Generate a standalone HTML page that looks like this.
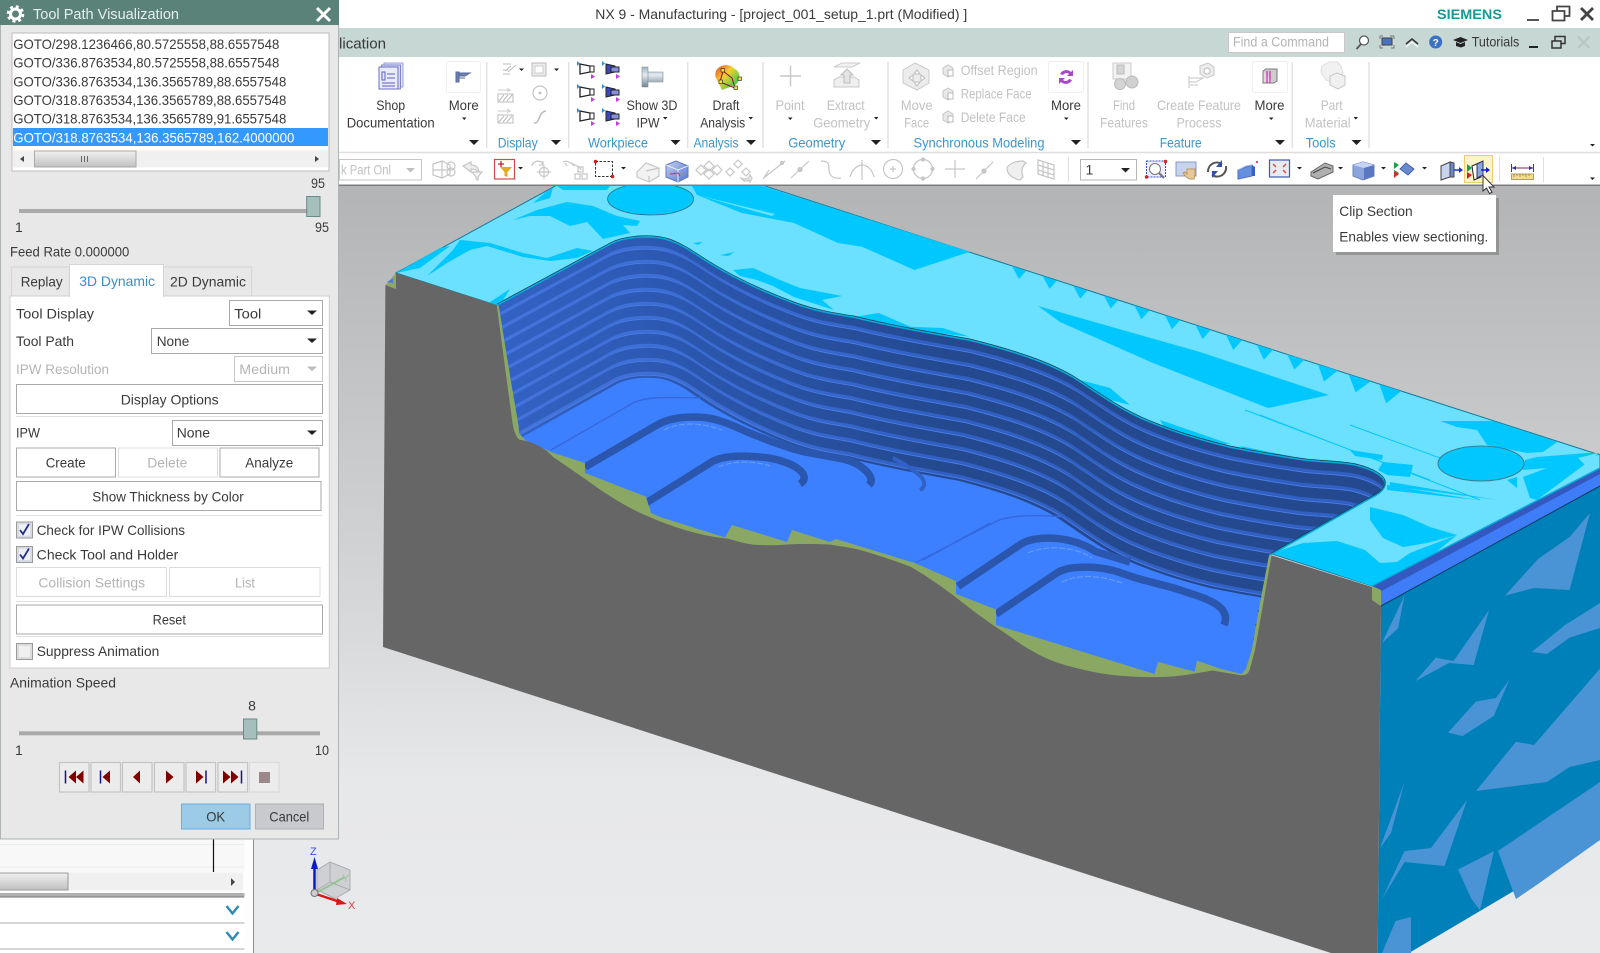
<!DOCTYPE html>
<html lang="en"><head><meta charset="utf-8"><title>NX 9 - Manufacturing</title>
<style>
html,body{margin:0;padding:0;background:#fff;width:1600px;height:953px;overflow:hidden}
svg{display:block;position:absolute;left:0;top:0}
text{font-family:"Liberation Sans",sans-serif;font-size:14px;fill:#3a3a3a}
.d{fill:#c2c2c2}.b{fill:#3b96cc}.g{fill:#b4b4b4}
.m{text-anchor:middle}
.btn{fill:#fff;stroke:#a9a9a9}.btd{fill:#fff;stroke:#dcdcdc}
.lr{stroke:#c6c6c6;fill:none;stroke-width:1.2}
.sep{stroke:#e2e2e2;stroke-width:1.5}
.ar{fill:#222}
</style></head><body>
<svg width="1600" height="953" viewBox="0 0 1600 953">
<defs>
<linearGradient id="bg" gradientUnits="userSpaceOnUse" x1="0" y1="185" x2="0" y2="953"><stop offset="0" stop-color="#b3b4b5"/><stop offset=".52" stop-color="#d4d5d6"/><stop offset=".78" stop-color="#e7e8ea"/><stop offset="1" stop-color="#e9eaec"/></linearGradient>
<linearGradient id="sc" x1="0" y1="0" x2="0" y2="1"><stop offset="0" stop-color="#f0f0f0"/><stop offset=".5" stop-color="#d8d8d8"/><stop offset="1" stop-color="#c0c0c0"/></linearGradient>
<linearGradient id="cyl" x1="0" y1="0" x2="0" y2="1"><stop offset="0" stop-color="#9fb4c0"/><stop offset=".4" stop-color="#e4eaee"/><stop offset="1" stop-color="#6f8494"/></linearGradient>
<linearGradient id="drf" x1="0" y1="0" x2="1" y2="1"><stop offset="0" stop-color="#e8402a"/><stop offset=".4" stop-color="#f4d030"/><stop offset=".8" stop-color="#50c850"/></linearGradient>
<linearGradient id="cb" x1="0" y1="0" x2="1" y2="1"><stop offset="0" stop-color="#c4d0ee"/><stop offset="1" stop-color="#5577cc"/></linearGradient>
<linearGradient id="tg" gradientUnits="userSpaceOnUse" x1="497" y1="0" x2="950" y2="0"><stop offset="0" stop-color="#3262c4"/><stop offset=".45" stop-color="#2a56ad"/><stop offset="1" stop-color="#24498f"/></linearGradient>
<linearGradient id="tm" gradientUnits="userSpaceOnUse" x1="497" y1="0" x2="950" y2="0"><stop offset="0" stop-color="#4474dc"/><stop offset=".5" stop-color="#3a6cd4"/><stop offset="1" stop-color="#3160c4"/></linearGradient>
<path id="rim" fill="none" d="M497,305L610,244C625,236 655,234 672,241C690,248 700,258 722,270C745,283 770,294 794,303C815,311 835,314 854,317C890,326 930,333 970,340C1010,350 1050,362 1078,380C1105,398 1125,412 1153,423C1180,434 1205,441 1230,447C1255,452 1285,457 1306,460C1325,462 1342,462 1356,465C1372,469 1386,476 1385,484C1384,492 1374,496 1367,500L1270.5,554.6"/>
<clipPath id="pk"><path d="M497,305L610,244C625,236 655,234 672,241C690,248 700,258 722,270C745,283 770,294 794,303C815,311 835,314 854,317C890,326 930,333 970,340C1010,350 1050,362 1078,380C1105,398 1125,412 1153,423C1180,434 1205,441 1230,447C1255,452 1285,457 1306,460C1325,462 1342,462 1356,465C1372,469 1386,476 1385,484C1384,492 1374,496 1367,500L1269,555L1260.7,599L1251.8,650L1246,668.6L1241.5,674L1221,669L1197,660.6L1194.6,671.6L1158,662L1154.5,674L996,625L996,609.5L956,594L956,581L914.5,563L836,539L830,542L792,530L787,542L732,525L725,537.5L660,517L651,513L646,496.7L585,473L585,463L553,452.7L525,440L519,433L518.8,426.7L510.8,380L498.7,305Z"/></clipPath>
<g id="ter">
<use href="#rim" stroke="url(#tg)" stroke-width="16" transform="translate(0,7)"/>
<use href="#rim" stroke="url(#tm)" stroke-width="3" transform="translate(0,10.5)"/>
<use href="#rim" stroke="#4a7ce4" stroke-width="1" transform="translate(0,12.5)"/>
</g>
<g id="wp"><path d="M-7,-5L3,-3V3L-7,5Z" fill="#fff" stroke="#222" stroke-width="1.3"/><path d="M3,-3H7V3H3Z" fill="#fff" stroke="#222"/><path d="M-10,-8l3,2.5l-3,2.5Z" fill="#2f8fd8"/><path d="M4,5l4,2.5l-4,2.5Z" fill="#c040d8"/></g>
<g id="wq"><path d="M-6,-5L3,-3V3L-6,5Z" fill="#3a48b8" stroke="#222"/><path d="M-1,-2H7V3H-1Z" fill="#8a90e0" stroke="#222"/><path d="M-10,-8l3,2.5l-3,2.5Z" fill="#2f8fd8"/><path d="M4,5l4,2.5l-4,2.5Z" fill="#c040d8"/></g>
<g id="hat"><rect x="-8" y="-3" width="15" height="8" fill="#fff" stroke="#bbb"/><path d="M-7,4l5,-6M-3,4l5,-6M1,4l5,-6" stroke="#bbb"/><path d="M-8,-7h12l-3,-2M4,-7l-3,2" stroke="#ccc" fill="none"/></g>
<g id="sf"><path d="M-5,-3l5,-3l5,3v6l-5,3l-5,-3Z" fill="#e8e8e8" stroke="#c6c6c6"/><rect x="0" y="-1" width="5" height="6" fill="#fff" stroke="#b8b8b8"/></g>
</defs>

<!-- viewport -->
<rect x="253" y="185" width="1347" height="768" fill="url(#bg)"/>

<!-- part top surface -->
<path d="M396,273L557,185H762L1000,262L1600,455V468L1372,586Z" fill="#6ce0ff" stroke="#127a9c" stroke-width="1"/>
<g fill="#00c8ff">
<path d="M557,186H610L607,190H563Z"/>
<path d="M547,191L553,188L550,198L533,203Z"/>
<path d="M513,220L537,210L567,202L593,206L617,216L640,221L637,226L623,225L630,233L603,239L587,222L570,226L550,216L530,216Z"/>
<path d="M460,240L490,243L523,253L547,258L577,248L593,251L577,258L550,261L523,257L487,246L470,250L447,263L427,276L453,250Z"/>
<path d="M396,273L440,248L450,246L420,268Z"/>
<path d="M692,186H762L970,251.7L914.5,270L862,246.7L838,243L794,223L741.8,213L697,195Z"/>
<path d="M733,270L753,268L780,280L800,288L842,296L822,300L834,310L794,297L773,286L757,280L740,276Z"/>
<path d="M693,243L703,242L698,245ZM720,255L735,252L728,256Z"/>
<path d="M487,304L510,289L500,305Z"/>
<path d="M854,317L878.6,313L910.5,326.7L942.7,328L970,336.7L910,330Z"/>
<path d="M1038,306L1200,352L1329,395L1268,408L1153,363L1060,322Z"/>
<path d="M1012,266l14,5 -7,8zm30.6,9.85l14,5 -7,8zm30.6,9.85l14,5 -7,8zm30.6,9.85l14,5 -7,8zm30.6,9.85l15,5 -8,9zm30.6,9.85l15,5 -8,9zm30.6,9.85l15,5 -8,9zm30.6,9.85l16,5 -9,10zm30.6,9.85l16,5 -9,10zm30.6,9.85l17,5 -10,10zm30.6,9.85l20,6 -14,11zm30.6,9.85l22,7 -15,11zm30.6,9.85l22,7 -15,12z"/>
<path d="M1440,421H1493L1557,442L1543,452L1527,453L1487,445L1477,430L1457,427Z"/>
<path d="M1525,460L1537,457L1587,453H1600L1537,500L1530,498L1523,477L1547,468L1523,470Z"/>
<path d="M1272,553L1303,543L1337,541L1365,550L1380,563L1397,562L1410,553L1457,535L1430,557L1372,586Z"/>
<path d="M1370,507L1403,515L1430,527L1457,535L1427,543L1403,547L1383,538L1370,520Z"/>
<path d="M1387,485L1477,500L1387,490ZM1390,482L1497,500L1390,486Z"/>
<path d="M1383,462L1413,465L1410,477L1387,475L1378,470Z"/>
<path d="M1350,450L1383,455L1382,460L1355,456Z"/>
<path d="M1507,480L1517,477L1517,488Z"/>
<path d="M1240,446L1290,456L1260,462Z"/><path d="M1160,420L1230,444L1180,446L1168,434Z"/><path d="M1080,380L1110,388L1130,405L1095,396Z"/>
</g>
<g fill="#6ce0ff">
<path d="M697,195L775,214L772,216Z"/>
<path d="M1543,452L1568,445L1563,453Z"/><path d="M1578,458L1598,453L1587,467Z"/>
</g>
<path d="M1245,410L1430,480M1350,425L1500,480M1260,415L1480,500" stroke="#00c8ff" fill="none"/>
<ellipse cx="650.6" cy="199" rx="43" ry="16" fill="#00c8ff" stroke="#2a6f80" stroke-width=".8"/>
<ellipse cx="1481" cy="463.500" rx="43" ry="17.5" fill="#00c8ff" stroke="#3b7f90" stroke-width="1"/>

<!-- right ledge and side face -->
<path d="M1381,606L1600,486V840L1409,953H1377.7Z" fill="#0080b8"/>
<g fill="#4a94d6">
<path d="M1505,595.6L1538,559L1569.6,537L1590,513L1569.6,590L1534,588Z"/>
<path d="M1415.6,681L1435.7,657.7L1453.6,661L1489,610L1473.7,665L1449,663Z"/>
<path d="M1531.7,652L1565,625L1600,603V628L1569.6,637.6L1547,654Z"/>
<path d="M1448,732.6L1476,701.5L1496,698L1509.4,679.6L1493.7,716L1462.5,736Z"/>
<path d="M1476,791L1516,741.7L1534,745L1600,668.6V760L1569.6,767L1547,782Z"/>
<path d="M1380,848L1404.5,782L1391,833Z"/>
<path d="M1382,899L1404.5,851L1431,848L1467,800L1444.6,866L1404.5,862Z"/>
<path d="M1458,869.6L1494,851L1480,910L1471.4,899Z"/>
<path d="M1498,851L1600,782V840L1538,884L1516,899Z"/>
<path d="M1382,953L1395.6,921L1411,917V953Z"/>
<path d="M1382,643L1404.5,595.6L1398,628.4Z"/>
</g>
<path d="M1372,586L1600,468V486L1381,606L1372,599Z" fill="#3f7cf8"/>
<path d="M1372,586L1600,468V474L1376,594Z" fill="#3358c0"/>
<path d="M1372,586L1600,468" stroke="#0aa8d8" stroke-width="1.5"/>
<path d="M1381,606L1600,486" stroke="#123a60" stroke-width="1"/>

<!-- green section beneath pocket -->
<path d="M497,305L1271,555L1254,690L1000,690L500,470Z" fill="#8aa864"/>
<path d="M385.4,285L396,273V289Z" fill="#8aa864"/><path d="M387,282L393,278.5V283Z" fill="#4a78e0"/>
<path d="M1372,586V600L1381,606V590Z" fill="#8aa864"/>

<!-- pocket -->
<g clip-path="url(#pk)">
<rect x="480" y="220" width="920" height="470" fill="#3d80ff"/>
<use href="#ter"/>
<use href="#ter" transform="matrix(.996,0,0,1,2.8,14)"/>
<use href="#ter" transform="matrix(.992,0,0,1,5.6,28)"/>
<use href="#ter" transform="matrix(.988,0,0,1,8.4,42)"/>
<use href="#ter" transform="matrix(.984,0,0,1,11.2,56)"/>
<use href="#ter" transform="matrix(.98,0,0,1,14,70)"/>
<use href="#ter" transform="matrix(.976,0,0,1,16.8,84)"/>
<use href="#ter" transform="matrix(.972,0,0,1,19.6,98)"/>
<use href="#ter" transform="matrix(.968,0,0,1,22.4,112)"/>
<use href="#ter" transform="matrix(.964,0,0,1,25.2,126)"/>
<g fill="none">
<path d="M551,450L633,403C645,397 660,397 701,398M915.6,562.7L993.8,522.5C1005,516 1030,514 1065,517M923,560L990,523" stroke="#3568dc" stroke-width="1.4"/>
<path d="M585,467L657,425C672,416 700,415 717,420C735,425 745,432 760,437C780,445 795,450 810,453C830,457 848,458 860,466C870,473 874,480 869,485" stroke="#2a56ad" stroke-width="7.500"/>
<path d="M646,503L710,463C720,456 740,455 760,457C775,458 790,463 797,468C806,474 806,480 800,484" stroke="#2a56ad" stroke-width="7.500"/>
<path d="M893,458C905,464 917,472 922,478C926,484 924,488 920,490" stroke="#2f62c4" stroke-width="4"/>
<path d="M958,586.4L1020.5,544.4C1035,535 1070,535 1096,551.7L1130,562" stroke="#2a56ad" stroke-width="7.500"/>
<path d="M996,614L1056,573.6C1068,565 1100,565 1123,573.6C1145,582 1168,585 1185.7,592C1205,598 1232,606 1224,625" stroke="#2a56ad" stroke-width="7.500"/>
<path d="M664,430C680,422 700,422 722,430M718,467C735,460 755,461 770,466M1028,553C1045,545 1075,546 1092,558M1062,582C1078,574 1100,575 1122,583" stroke="#6a9cff" stroke-width="1.100" stroke-dasharray="6 2"/>
</g>
</g>
<use href="#rim" stroke="#0aa8d8" stroke-width="2"/>
<use href="#rim" stroke="#11404f" stroke-width=".7" transform="translate(0,-1)"/>

<!-- gray section face -->
<path d="M385.4,285L396,289L396,273L496.7,305L506.7,380L512.8,425C515,435 518,440 521,440C530,441 545,447 553,457C565,465 575,472 589,481.7C610,497 630,509 649,516.7C670,526 700,536 727,538.5C740,542 750,545 760,545C775,546 790,544 800,544C815,544 825,544 833,545C845,547 852,548 860,550C875,554 895,561 910.5,566.7L922,573.6C935,582 948,591 958,599C972,610 985,620 998,628.4C1010,636 1022,646 1034,652C1048,660 1063,665 1078.6,668.6C1093,672 1108,675 1123,676C1138,677 1153,677.5 1168,676.7C1183,676 1198,673 1212.5,670.5L1239,675C1245,676 1248,674 1249.5,670.5L1255,650L1264,599L1271.4,555.4L1372,587L1372,600L1381,606L1377.7,953H1331L383,647Z" fill="#666"/>

<!-- triad -->
<path d="M317,870l13,-8l20,8v20l-15,8.500l-18,-8.500Z" fill="#b9bcbf" fill-opacity=".55" stroke="#a9acae"/>
<path d="M330,862v20l20,8M330,882l-13,8" stroke="#a9acae" fill="none"/>
<path d="M316,893L345,877" stroke="#7fbf7f" stroke-width="2" opacity=".7"/>
<text x="342" y="882" fill="#8fc28f" style="font-size:11px;fill:#9cc49c">Y</text>
<path d="M314.500,893V868" stroke="#0a1ac8" stroke-width="2.500"/><path d="M314.500,857l-3.500,12h7Z" fill="#0a1ac8"/>
<text x="310" y="855" style="font-size:11px;fill:#3a50e0">Z</text>
<path d="M316,894L340,902" stroke="#d81818" stroke-width="2.500"/><path d="M347,904l-10,-6l-1,7Z" fill="#d81818"/>
<text x="348" y="909" style="font-size:11px;fill:#e04040">X</text>
<circle cx="314.500" cy="893" r="3.500" fill="#ccc" stroke="#777"/>

<!-- window chrome -->
<rect x="339" y="0" width="1261" height="28" fill="#fff"/>
<text x="595.300" y="19" textLength="372" lengthAdjust="spacingAndGlyphs">NX 9 - Manufacturing - [project_001_setup_1.prt (Modified) ]</text>
<text x="1437" y="19" textLength="65" lengthAdjust="spacingAndGlyphs" style="font-weight:bold;fill:#159a96;font-size:14px">SIEMENS</text>
<path d="M1527,20h12" stroke="#555" stroke-width="2"/>
<path d="M1552.500,11h12v9.500h-12ZM1557,10.500V6.500h12.500v9.500h-5" fill="none" stroke="#444" stroke-width="1.800"/>
<path d="M1581,8l12,12M1593,8l-12,12" stroke="#444" stroke-width="2.800"/>
<rect x="339" y="28" width="1261" height="29" fill="#c6d7d4"/>
<text x="339" y="48.300" textLength="47" lengthAdjust="spacingAndGlyphs" style="font-size:15px">lication</text>
<rect x="1228.500" y="32.500" width="116" height="20" fill="#fff" stroke="#c8c8c8"/>
<text x="1233" y="46.500" textLength="96" lengthAdjust="spacingAndGlyphs" class="g">Find a Command</text>
<circle cx="1364" cy="40.500" r="4.500" fill="#fff" stroke="#555" stroke-width="1.200"/><path d="M1361,44l-4.500,5" stroke="#555" stroke-width="1.800"/>
<path d="M1380,36h3m7,0h4v-0M1380,36v3M1394,36v3M1380,45v3h3M1394,45v3h-3" stroke="#777" fill="none"/><rect x="1382" y="38" width="10" height="7" fill="#4a70c0" stroke="#444"/>
<path d="M1406,44l6,-5l6,5" fill="none" stroke="#333" stroke-width="1.600"/><path d="M1406,47l6,-5l6,5" fill="none" stroke="#fff"/>
<circle cx="1435.700" cy="42" r="6.500" fill="#3a70c8"/><text x="1435.700" y="46" class="m" style="font-size:10px;font-weight:bold;fill:#fff">?</text>
<path d="M1453,40l7.500,-3l7.500,3l-7.500,3Z" fill="#222"/><path d="M1456,42v4l5,1.500l4,-1.500v-4l-4.500,2Z" fill="#222"/>
<text x="1471.700" y="46.500" textLength="47.600" lengthAdjust="spacingAndGlyphs">Tutorials</text>
<path d="M1529,47h9" stroke="#222" stroke-width="2"/>
<path d="M1552,41h9v7h-9ZM1555,40.500V36.500h10v7h-4" fill="none" stroke="#333" stroke-width="1.500"/>
<path d="M1578,36.500l11.500,11.500M1589.500,36.500l-11.500,11.500" stroke="#bcc4c2" stroke-width="2.200"/>

<!-- ribbon -->
<rect x="339" y="57" width="1261" height="128" fill="#fff"/>
<path d="M339,152.500H1600" stroke="#dedede" stroke-width="1.500"/>
<path d="M339,185.300H1600" stroke="#7c7c7c" stroke-width="1.500"/>
<g class="sep"><path d="M486.700,62V148M568.700,62V148M687.700,62V148M763,62V148M888,62V148M1088,62V148M1292.300,62V148M1369,62V148"/></g>
<rect x="446.500" y="61.500" width="34" height="31" rx="2" fill="#fff" stroke="#efefef"/>
<rect x="1048.500" y="61.500" width="35" height="31" rx="2" fill="#fff" stroke="#efefef"/>
<rect x="1252.500" y="61.500" width="35" height="31" rx="2" fill="#fff" stroke="#efefef"/>

<g text-anchor="middle">
<text x="390.700" y="110" textLength="29" lengthAdjust="spacingAndGlyphs">Shop</text>
<text x="390.700" y="127.700" textLength="88" lengthAdjust="spacingAndGlyphs">Documentation</text>
<text x="463.700" y="110" textLength="30" lengthAdjust="spacingAndGlyphs">More</text>
<text x="652" y="110" textLength="51" lengthAdjust="spacingAndGlyphs">Show 3D</text>
<text x="648" y="127.700" textLength="23" lengthAdjust="spacingAndGlyphs">IPW</text>
<text x="726" y="110" textLength="27" lengthAdjust="spacingAndGlyphs">Draft</text>
<text x="722.700" y="127.700" textLength="45" lengthAdjust="spacingAndGlyphs">Analysis</text>
<text x="790" y="110" textLength="29" lengthAdjust="spacingAndGlyphs" class="d">Point</text>
<text x="845.700" y="110" textLength="38" lengthAdjust="spacingAndGlyphs" class="d">Extract</text>
<text x="841.700" y="127.700" textLength="57" lengthAdjust="spacingAndGlyphs" class="d">Geometry</text>
<text x="916.700" y="110" textLength="32" lengthAdjust="spacingAndGlyphs" class="d">Move</text>
<text x="916.700" y="127.700" textLength="25" lengthAdjust="spacingAndGlyphs" class="d">Face</text>
<text x="1066" y="110" textLength="30" lengthAdjust="spacingAndGlyphs">More</text>
<text x="1124" y="110" textLength="22" lengthAdjust="spacingAndGlyphs" class="d">Find</text>
<text x="1124" y="127.700" textLength="48" lengthAdjust="spacingAndGlyphs" class="d">Features</text>
<text x="1199" y="110" textLength="84" lengthAdjust="spacingAndGlyphs" class="d">Create Feature</text>
<text x="1199" y="127.700" textLength="45" lengthAdjust="spacingAndGlyphs" class="d">Process</text>
<text x="1269.500" y="110" textLength="30" lengthAdjust="spacingAndGlyphs">More</text>
<text x="1331.700" y="110" textLength="22" lengthAdjust="spacingAndGlyphs" class="d">Part</text>
<text x="1327.700" y="127.700" textLength="46" lengthAdjust="spacingAndGlyphs" class="d">Material</text>
<text x="517.700" y="147.500" textLength="40" lengthAdjust="spacingAndGlyphs" class="b">Display</text>
<text x="618" y="147.500" textLength="60" lengthAdjust="spacingAndGlyphs" class="b">Workpiece</text>
<text x="716" y="147.500" textLength="45" lengthAdjust="spacingAndGlyphs" class="b">Analysis</text>
<text x="816.700" y="147.500" textLength="57" lengthAdjust="spacingAndGlyphs" class="b">Geometry</text>
<text x="979" y="147.500" textLength="131" lengthAdjust="spacingAndGlyphs" class="b">Synchronous Modeling</text>
<text x="1180.700" y="147.500" textLength="42" lengthAdjust="spacingAndGlyphs" class="b">Feature</text>
<text x="1320.700" y="147.500" textLength="30" lengthAdjust="spacingAndGlyphs" class="b">Tools</text>
</g>
<text x="960.700" y="75" textLength="77" lengthAdjust="spacingAndGlyphs" class="d">Offset Region</text>
<text x="960.700" y="98.500" textLength="71" lengthAdjust="spacingAndGlyphs" class="d">Replace Face</text>
<text x="960.700" y="122" textLength="65" lengthAdjust="spacingAndGlyphs" class="d">Delete Face</text>

<!-- group arrows -->
<g class="ar">
<path d="M469,140h10l-5,5ZM551,140h10l-5,5ZM670.500,140h10l-5,5ZM746,140h10l-5,5ZM871,140h10l-5,5ZM1071,140h10l-5,5ZM1275,140h10l-5,5ZM1351.500,140h10l-5,5Z"/>
<path d="M1590,144h5l-2.500,2.500ZM1590,177.500h5l-2.500,2.500Z"/>
<path d="M462,117.500h4.500l-2.250,2.500ZM788,117.500h4.500l-2.250,2.500ZM1064,117.500h4.500l-2.250,2.500ZM1269,117.500h4.500l-2.250,2.500ZM663,117h4.500l-2.250,2.500ZM748.500,117h4.500l-2.250,2.500ZM874,117h4.500l-2.250,2.500ZM1353.500,117h4.500l-2.250,2.500Z"/>
<path d="M519,68.500h5l-2.500,2.500ZM554,68.500h5l-2.500,2.500Z"/>
</g>

<!-- ribbon icons -->
<rect x="384" y="63" width="19" height="24" fill="#e4e6f8" stroke="#9a9fd8"/><rect x="381.500" y="65" width="19" height="24" fill="#d6daf6" stroke="#7f86cc"/><rect x="379" y="67" width="19" height="22" fill="#e9ebfb" stroke="#6a70c0"/><path d="M382,72h3v8h-3ZM387,74h8M387,78h8M382,83h13M382,86h13" stroke="#5a62b8" fill="none"/>
<path d="M456,72h3v10h-3ZM459,73h11l-5,3h-6ZM459,78h6" fill="#6c80b4" stroke="#5a6a98"/>
<path d="M503,64h8M503,70h5M511,66l-6,5M508,72l8,-7M503,74h7" stroke="#bbb" fill="none"/>
<rect x="532" y="63" width="14" height="13" fill="#ececec" stroke="#bbb"/><rect x="535" y="66" width="8" height="7" fill="#fff" stroke="#ccc"/>
<use href="#hat" x="506" y="97"/><use href="#hat" x="506" y="118"/>
<circle cx="540" cy="93" r="7" fill="#fff" stroke="#c4c4c4" stroke-width="1.200"/><circle cx="540" cy="93" r="1.400" fill="#bbb"/>
<path d="M534,123C540,124 538,112 546,111" stroke="#bbb" fill="none" stroke-width="1.500"/>
<use href="#wp" x="587" y="69"/><use href="#wq" x="612" y="69"/><use href="#wp" x="587" y="92"/><use href="#wq" x="612" y="92"/><use href="#wp" x="587" y="116"/><use href="#wq" x="612" y="116"/>
<path d="M642,67h6v20h-6ZM648,72h15v10h-15Z" fill="url(#cyl)" stroke="#7f8e98" stroke-width=".6"/>
<path d="M716,78C712,68 726,60 735,69C742,73 740,82 735,85L722,90Z" fill="url(#drf)"/>
<path d="M723,71L720,82L735,88M723,71L732,78L735,88" stroke="#8a1020" fill="none"/><g fill="#f0e040" stroke="#222" stroke-width=".6"><rect x="721" y="68.500" width="3.500" height="3.500"/><rect x="719" y="80" width="3.500" height="3.500"/><rect x="738" y="77" width="3.500" height="3.500"/><rect x="734" y="86" width="3.500" height="3.500"/></g>
<path d="M780,76h21M790.500,65.500v21" stroke="#c8c8c8" stroke-width="1.500"/>
<path d="M834,80v7h25v-7l-5,-3h-15Z" fill="#efefef" stroke="#c8c8c8"/><path d="M844,83v-8h-3l6,-6l6,6h-3v8Z" fill="#e4e4e4" stroke="#bbb"/><path d="M834,67l8,-4h18l-8,4Z" fill="#f2f2f2" stroke="#ccc"/>
<path d="M903,70l12,-7l14,7v13l-12,7l-14,-7Z" fill="#ececec" stroke="#cbcbcb"/><path d="M917,78m0,-8l3,4h-6ZM917,86l3,-4h-6ZM909,78l4,-3v6ZM925,78l-4,-3v6Z" fill="#fff" stroke="#bbb"/>
<use href="#sf" x="948" y="71"/><use href="#sf" x="948" y="94"/><use href="#sf" x="948" y="117"/>
<path d="M1060,74a7,7 0 0 1 11,-2l2,-2v6h-6l2,-2a4,4 0 0 0 -6,1ZM1072,80a7,7 0 0 1 -11,2l-2,2v-6h6l-2,2a4,4 0 0 0 6,-1Z" fill="#a848c8"/>
<rect x="1113" y="63" width="18" height="16" fill="#f2f2f2" stroke="#ccc"/><rect x="1117" y="65" width="7" height="9" fill="#d4d4d4" stroke="#bbb"/><circle cx="1120" cy="84" r="5.500" fill="#d4d4d4" stroke="#bbb"/><circle cx="1132" cy="82" r="6" fill="#d0d0d0" stroke="#bbb"/>
<path d="M1189,76v12M1189,78h14l-7,4h-7M1190,85h8" stroke="#c4c4c4" fill="none"/><path d="M1200,66l8,-3l6,4v8l-7,3l-7,-4Z" fill="#ececec" stroke="#c8c8c8"/><circle cx="1207" cy="71" r="3" fill="#fff" stroke="#bbb"/>
<rect x="1263" y="71" width="11" height="12" fill="#ddd" stroke="#777"/><path d="M1263,71l3,-2h11v12l-3,2" fill="#ccc" stroke="#777"/><path d="M1267,71v12M1270,71v12" stroke="#e020c0" stroke-width="1.200"/>
<path d="M1322,66l7,-4h8l4,4l2,7l-7,10l-10,-3l-5,-8Z" fill="#f1f1f1" stroke="#ddd"/><path d="M1330,76l7,-3l8,3v9l-7,4l-8,-4Z" fill="#f0f0f0" stroke="#c8c8c8"/>

<!-- toolbar -->
<rect x="339.500" y="159.500" width="82" height="20.500" fill="#fff" stroke="#c6c6c6"/>
<text x="341" y="174.500" textLength="50" lengthAdjust="spacingAndGlyphs" class="d">k Part Onl</text>
<path d="M406,168h9l-4.500,4.500Z" fill="#c0c0c0"/>
<g class="lr">
<path d="M433,164l9,-3v17l-9,-3ZM442,161l8,4v9l-8,4M433,170h17"/><circle cx="451" cy="166" r="4"/><circle cx="451" cy="172" r="4"/>
<path d="M463,166l8,-4v3c6,0 8,4 8,8c-2,-3 -4,-4 -8,-4v3Z" fill="#eee"/><path d="M472,172h10l-4,5v3l-2,-1v-2Z" fill="#f4f4f4"/>
<path d="M532,166a6,6 0 0 1 11,-2M543,161v4h-4"/><circle cx="544" cy="172" r="4.500"/><path d="M544,165v14M537,172h14"/>
<path d="M563,162c4,-2 7,1 10,2c3,2 7,2 8,6M565,163l2,3M572,163l2,3"/><rect x="578" y="167" width="5" height="5"/><rect x="575" y="174" width="5" height="5"/><rect x="582" y="174" width="5" height="5"/>
<path d="M637,172l9,-9l13,5v8l-10,6l-12,-5Z" fill="#f2f2f2"/><path d="M646,171l13,-3M649,176v6"/>
<path d="M709,161l5,5l-5,5l-5,-5ZM709,169l5,5l-5,5l-5,-5ZM701,165l5,5l-5,5l-5,-5ZM717,165l5,5l-5,5l-5,-5Z"/>
<path d="M738,160l4,4l-4,4l-4,-4ZM730,168l4,4l-4,4l-4,-4ZM746,168l4,4l-4,4l-4,-4Z"/><path d="M741,178c4,2 8,1 9,-3l2,3l-2,4l-1,-2c-3,2 -6,1 -8,-2Z" fill="#eee"/>
<path d="M765,177L785,161M769,170l-6,9" /><circle cx="782" cy="163" r="1.500" fill="#c6c6c6"/>
<path d="M791,178l18,-17M798,171l3,0"/><circle cx="800" cy="169.500" r="2" fill="#c6c6c6"/>
<path d="M821,161c8,0 8,4 8,8c0,5 2,10 12,9"/>
<path d="M850,177c2,-8 8,-12 12,-12c5,0 10,4 12,12M862,165v15M862,160v6"/>
<circle cx="893" cy="169" r="9.500"/><path d="M890,169h6M893,166v6"/>
<circle cx="923" cy="169" r="9.500"/><circle cx="923" cy="159.500" r="1.500" fill="#c6c6c6"/><circle cx="913.500" cy="169" r="1.500" fill="#c6c6c6"/><circle cx="932.500" cy="169" r="1.500" fill="#c6c6c6"/><circle cx="923" cy="178.500" r="1.500" fill="#c6c6c6"/>
<path d="M945,169h20M955,160v18"/><path d="M976,179l17,-17"/><circle cx="984" cy="171" r="2" fill="#c6c6c6"/>
<path d="M1007,168c2,-5 10,-7 16,-7l3,2c-4,3 -5,8 -3,14l-3,3c-8,-2 -13,-6 -13,-12Z" fill="#efefef"/>
<path d="M1038,160l16,5v14l-16,-5ZM1043,162v13M1048,163v14M1038,165l16,5M1038,170l16,5"/>
</g>
<rect x="494.500" y="159.500" width="20" height="19.500" fill="#fff" stroke="#d24a4a" stroke-width="1.200"/><path d="M500,167h12l-4.500,5v5l-3,-1v-4Z" fill="#e8a820"/><path d="M498,164h6M501,161v6" stroke="#c02020" stroke-width="1.300"/>
<path d="M518,167h5l-2.500,2.500ZM621,167h5l-2.500,2.500Z" class="ar"/>
<rect x="595.500" y="161.500" width="17" height="15" fill="none" stroke="#333" stroke-dasharray="2.500 1.500"/><circle cx="595.500" cy="161.500" r="1.800" fill="#d02020"/><circle cx="612.500" cy="176.500" r="1.800" fill="#d02020"/>
<path d="M666,165l10,-4l12,5v11l-10,5l-12,-5Z" fill="url(#cb)" stroke="#5a78c8"/><path d="M666,165l12,5l10,-4M678,170v12" stroke="#fff" fill="none" stroke-width=".8"/><path d="M670,174l8,-1l2,3" stroke="#d83030" fill="none"/>
<path d="M1068.500,157V182" stroke="#dedede"/>
<rect x="1080.500" y="159.500" width="56" height="20.500" fill="#fff" stroke="#b6b6b6"/><text x="1085.500" y="174.500">1</text><path d="M1121,168h9l-4.500,4.500Z" class="ar"/>
<rect x="1146.500" y="161" width="19" height="16" fill="#eef" stroke="#3050c0" stroke-dasharray="2 1"/><circle cx="1155" cy="169" r="5.500" fill="#fff" stroke="#777"/><path d="M1159,173l5,5" stroke="#777" stroke-width="2"/><circle cx="1146.500" cy="177" r="1.700" fill="#d82020"/><circle cx="1165.500" cy="161.500" r="1.700" fill="#d82020"/>
<rect x="1176" y="162" width="20" height="14" fill="#c8d4ee" stroke="#8898c8"/><path d="M1190,179c-4,-1 -5,-4 -7,-6l2,-1l2,2v-5h8v5l-1,5Z" fill="#e8c898" stroke="#b89860"/>
<path d="M1208,172a9,9 0 0 1 14,-8M1226,166a9,9 0 0 1 -14,9" fill="none" stroke="#555" stroke-width="2"/><path d="M1222,160v7h-6ZM1212,178v-7h6Z" fill="#3050b0"/>
<path d="M1238,170l14,-5v11l-14,3Z" fill="#6890e0" stroke="#4a6cc0"/><path d="M1252,165l3,2v9l-3,0Z" fill="#3860c0"/><path d="M1238,170l8,-4l6,-1" stroke="#a0b8f0" fill="none"/><circle cx="1257" cy="162" r="1" fill="#d02020"/>
<rect x="1269.500" y="160" width="20" height="17" fill="#e8eaf6" stroke="#3a5ab0" stroke-width="1.200"/><path d="M1273,164l3,3M1286,164l-3,3M1273,173l3,-3M1286,173l-3,-3" stroke="#e05030" stroke-width="1.500"/>
<path d="M1297,167h5l-2.500,2.500ZM1338,167h5l-2.500,2.500ZM1381,167h5l-2.500,2.500ZM1422,167h5l-2.500,2.500Z" class="ar"/>
<path d="M1311,172l14,-9l8,3v6l-15,7l-7,-3Z" fill="#b0b0b0" stroke="#666"/><path d="M1313,173l12,-6l6,2" stroke="#444" fill="none"/>
<path d="M1353,165l10,-3l11,3v11l-11,4l-10,-4Z" fill="#8ca4dc" stroke="#6a86c8"/><path d="M1353,165l11,3l10,-3l-11,-3Z" fill="#c8d4f4"/><path d="M1364,168v12l10,-4v-11Z" fill="#5a78c0"/>
<path d="M1394,162l5,3l-5,4ZM1394,170l5,3l-5,4Z" fill="#18a048"/><path d="M1394,171l5,3l-5,4Z" fill="#d03030"/><path d="M1400,169l6,-6l8,6l-6,6Z" fill="#6a8ad0" stroke="#4060b0"/>
<path d="M1441,166l9,-4v15l-9,3Z" fill="#c8d4ee" stroke="#444"/><path d="M1450,162l4,1v14l-4,0Z" fill="#6c88c8" stroke="#444"/><path d="M1454,170h7" stroke="#2030d0" stroke-width="1.500"/><path d="M1459,167l4,3l-4,3Z" fill="#2030d0"/>
<rect x="1464.500" y="155.500" width="28" height="27" fill="#fff3c8" stroke="#f0cc70"/>
<path d="M1472,166l9,-4v15l-7,3Z" fill="#fff" stroke="#222"/><path d="M1477,164l6,-3v14l-6,3Z" fill="#88a8e0" stroke="#336"/><path d="M1481,170h7" stroke="#1020e0" stroke-width="1.500"/><path d="M1486,167l4,3l-4,3Z" fill="#1020e0"/><path d="M1467,164l5,4l-5,4Z" fill="#18a048"/><path d="M1467,172l5,3l-5,4Z" fill="#d02020"/>
<path d="M1499.500,157V182M1543.500,157V182" stroke="#dedede"/>
<path d="M1512,168h21M1511.500,164v8M1533.500,164v8" stroke="#8a2040" fill="none"/><path d="M1512,168l4,-2v4ZM1533,168l-4,-2v4Z" fill="#2030c0"/><rect x="1511.500" y="174" width="22" height="5.500" fill="#f2dc90" stroke="#b0a060"/><path d="M1514,174v3M1517,174v2M1520,174v3M1523,174v2M1526,174v3M1529,174v2" stroke="#806020" stroke-width=".6"/>

<!-- cursor -->
<path d="M1483,175.500V191l3.500,-3l3,5.500l2.500,-1.200l-3,-5.300h5Z" fill="#fff" stroke="#333" stroke-width="1"/>

<!-- tooltip -->
<rect x="1336" y="198" width="163" height="57" fill="#777" opacity=".55"/>
<rect x="1333" y="195" width="163" height="57" fill="#fff"/>
<text x="1339.300" y="216" textLength="73.400" lengthAdjust="spacingAndGlyphs">Clip Section</text>
<text x="1339.300" y="241.500" textLength="149" lengthAdjust="spacingAndGlyphs">Enables view sectioning.</text>

<!-- lower left panel -->
<rect x="0" y="839" width="253" height="114" fill="#fdfdfd"/>
<rect x="0" y="839" width="244.500" height="33" fill="#f8f8f8"/>
<path d="M0,844.500H244M0,867H244" stroke="#ececec"/>
<path d="M213.500,839V872" stroke="#111" stroke-width="1.200"/>
<rect x="0" y="872.500" width="243" height="18" fill="#f0f0f0"/>
<rect x="-3" y="873" width="71" height="17" fill="url(#sc)" stroke="#999"/>
<path d="M231,878l4,4l-4,4Z" fill="#444"/>
<rect x="0" y="893" width="244.500" height="4" fill="#b0b0b0"/><path d="M0,897H244" stroke="#777"/>
<rect x="0" y="898" width="244.500" height="55" fill="#fff"/>
<path d="M0,923H244.500M0,949H244.500" stroke="#d0d0d0" stroke-width="1.800"/>
<path d="M226.500,906l6,7.500l6,-7.500M226.500,932l6,7.500l6,-7.500" fill="none" stroke="#2a8ab8" stroke-width="2.400"/>
<path d="M253.500,839V953" stroke="#8c8c8c" stroke-width="1"/>

<!-- dialog -->
<rect x=".5" y="0" width="338" height="839" fill="#e8e8e8" stroke="#aeb4b4"/>
<rect x="0" y="0" width="339" height="25" fill="#5b8279"/>
<circle cx="15.500" cy="14" r="5" fill="none" stroke="#fff" stroke-width="3"/><circle cx="15.500" cy="14" r="7.500" fill="none" stroke="#fff" stroke-width="2.600" stroke-dasharray="3 2.900"/>
<text x="33" y="18.800" textLength="146" lengthAdjust="spacingAndGlyphs" style="fill:#e6efec;font-size:15px">Tool Path Visualization</text>
<path d="M317,8l13,13M330,8l-13,13" stroke="#fff" stroke-width="3"/>

<rect x="12" y="33" width="317" height="138" fill="#fff" stroke="#bdbdbd"/>
<rect x="13" y="128" width="315" height="18" fill="#3399ff"/>
<text x="13.300" y="49" textLength="266" lengthAdjust="spacingAndGlyphs">GOTO/298.1236466,80.5725558,88.6557548</text>
<text x="13.300" y="67.700" textLength="266" lengthAdjust="spacingAndGlyphs">GOTO/336.8763534,80.5725558,88.6557548</text>
<text x="13.300" y="86.300" textLength="273" lengthAdjust="spacingAndGlyphs">GOTO/336.8763534,136.3565789,88.6557548</text>
<text x="13.300" y="105" textLength="273" lengthAdjust="spacingAndGlyphs">GOTO/318.8763534,136.3565789,88.6557548</text>
<text x="13.300" y="123.700" textLength="273" lengthAdjust="spacingAndGlyphs">GOTO/318.8763534,136.3565789,91.6557548</text>
<text x="13.300" y="142.300" textLength="281" lengthAdjust="spacingAndGlyphs" style="fill:#fff">GOTO/318.8763534,136.3565789,162.4000000</text>
<rect x="13" y="150.500" width="315" height="17" fill="#f0f0f0"/>
<rect x="34.500" y="151" width="101.500" height="16" fill="url(#sc)" stroke="#aaa"/>
<path d="M81.500,156v6M84.500,156v6M87.500,156v6" stroke="#666"/>
<path d="M24,156l-4,3l4,3ZM315,156l4,3l-4,3Z" fill="#444"/>

<rect x="19" y="209" width="288" height="4" fill="#a9a9a9"/>
<rect x="306.700" y="196.500" width="13.300" height="20" fill="#a5c0bc" stroke="#6a8a86"/>
<text x="318" y="188" class="m" textLength="14" lengthAdjust="spacingAndGlyphs">95</text>
<text x="15" y="232">1</text>
<text x="315" y="232" textLength="14" lengthAdjust="spacingAndGlyphs">95</text>
<text x="10" y="256.700" textLength="119.300" lengthAdjust="spacingAndGlyphs">Feed Rate 0.000000</text>

<rect x="11.700" y="267" width="57.600" height="30" fill="#e8e8e8" stroke="#d4d4d4"/>
<rect x="163.300" y="267" width="88.400" height="30" fill="#e8e8e8" stroke="#d4d4d4"/>
<rect x="10" y="296" width="319.300" height="372" fill="#fff" stroke="#cfcfcf"/>
<path d="M69.500,297V264.500H163.500V297" fill="#fff" stroke="#d4d4d4"/>
<text x="20.700" y="286.700" textLength="42" lengthAdjust="spacingAndGlyphs">Replay</text>
<text x="79.300" y="286" textLength="75.700" lengthAdjust="spacingAndGlyphs" style="fill:#3a8fc8">3D Dynamic</text>
<text x="170" y="286.700" textLength="76" lengthAdjust="spacingAndGlyphs">2D Dynamic</text>

<text x="16" y="318.300" textLength="78" lengthAdjust="spacingAndGlyphs">Tool Display</text>
<rect x="229.500" y="300.500" width="93" height="25" class="btn"/><text x="234.300" y="318.300" textLength="27" lengthAdjust="spacingAndGlyphs">Tool</text><path d="M307,310.500h10l-5,4.500Z" class="ar"/>
<text x="16" y="346" textLength="58" lengthAdjust="spacingAndGlyphs">Tool Path</text>
<rect x="151.500" y="328.500" width="171" height="25" class="btn"/><text x="156.700" y="346" textLength="32.600" lengthAdjust="spacingAndGlyphs">None</text><path d="M307,338.500h10l-5,4.500Z" class="ar"/>
<text x="16" y="374" textLength="93" lengthAdjust="spacingAndGlyphs" class="g">IPW Resolution</text>
<rect x="234.500" y="356.500" width="88" height="25" class="btn" style="stroke:#c8c8c8"/><text x="239.300" y="374" textLength="50.700" lengthAdjust="spacingAndGlyphs" class="g">Medium</text><path d="M307,366.500h10l-5,4.500Z" fill="#bbb"/>
<rect x="16.500" y="384.500" width="306" height="29" class="btn"/><text x="169.700" y="404.300" class="m" textLength="98" lengthAdjust="spacingAndGlyphs">Display Options</text>
<path d="M16,416.500H322M16,515.500H322M16,601.500H322M16,636.500H322" stroke="#e0e0e0"/>
<text x="16" y="437.700" textLength="24" lengthAdjust="spacingAndGlyphs">IPW</text>
<rect x="172.500" y="420.500" width="150" height="25" class="btn"/><text x="176.700" y="437.700" textLength="33.300" lengthAdjust="spacingAndGlyphs">None</text><path d="M307,430.500h10l-5,4.500Z" class="ar"/>
<rect x="16.500" y="448" width="99" height="29" class="btn"/><text x="65.700" y="467.700" class="m" textLength="40" lengthAdjust="spacingAndGlyphs">Create</text>
<rect x="118.500" y="448" width="99" height="29" class="btd"/><text x="167.300" y="467.700" class="m g" textLength="40" lengthAdjust="spacingAndGlyphs">Delete</text>
<rect x="220" y="448" width="99" height="29" class="btn"/><text x="269.300" y="467.700" class="m" textLength="48" lengthAdjust="spacingAndGlyphs">Analyze</text>
<rect x="16.500" y="481.500" width="304.500" height="29" class="btn"/><text x="168" y="501.300" class="m" textLength="151.400" lengthAdjust="spacingAndGlyphs">Show Thickness by Color</text>
<rect x="16.500" y="522" width="16" height="16" fill="#d8dbe4" stroke="#9a9a9a"/><rect x="19" y="524.500" width="11" height="11" fill="#eef0f6"/><path d="M20,530l3,4l6,-10" fill="none" stroke="#22308a" stroke-width="1.800"/>
<text x="36.700" y="535" textLength="148.300" lengthAdjust="spacingAndGlyphs">Check for IPW Collisions</text>
<rect x="16.500" y="546.500" width="16" height="16" fill="#d8dbe4" stroke="#9a9a9a"/><rect x="19" y="549" width="11" height="11" fill="#eef0f6"/><path d="M20,554.500l3,4l6,-10" fill="none" stroke="#22308a" stroke-width="1.800"/>
<text x="36.700" y="559.300" textLength="141.600" lengthAdjust="spacingAndGlyphs">Check Tool and Holder</text>
<rect x="16.500" y="567.500" width="150" height="29" class="btd"/><text x="91.700" y="587.300" class="m g" textLength="106.700" lengthAdjust="spacingAndGlyphs">Collision Settings</text>
<rect x="169.500" y="567.500" width="150.500" height="29" class="btd"/><text x="245" y="587.300" class="m g" textLength="20" lengthAdjust="spacingAndGlyphs">List</text>
<rect x="16.500" y="605" width="306" height="29" class="btn"/><text x="169.300" y="624.300" class="m" textLength="33.300" lengthAdjust="spacingAndGlyphs">Reset</text>
<rect x="16.500" y="643.500" width="16" height="16" fill="#dcdcdc" stroke="#9a9a9a"/><rect x="19" y="646" width="11" height="11" fill="#f0f0f0"/>
<text x="36.700" y="656" textLength="122.600" lengthAdjust="spacingAndGlyphs">Suppress Animation</text>

<text x="10" y="687.300" textLength="106" lengthAdjust="spacingAndGlyphs">Animation Speed</text>
<rect x="19" y="731.300" width="301" height="4" fill="#a9a9a9"/>
<rect x="243.500" y="719" width="13.300" height="20" fill="#a5c0bc" stroke="#6a8a86"/>
<text x="252" y="710.700" class="m">8</text>
<text x="15" y="755">1</text>
<text x="315" y="755" textLength="14" lengthAdjust="spacingAndGlyphs">10</text>

<g fill="#ececec" stroke="#c4c4c4" stroke-width="1.200">
<rect x="59.500" y="762.500" width="29.500" height="29.500"/><rect x="91" y="762.500" width="29.500" height="29.500"/><rect x="122.500" y="762.500" width="29.500" height="29.500"/><rect x="154.500" y="762.500" width="29.500" height="29.500"/><rect x="186" y="762.500" width="29.500" height="29.500"/><rect x="218" y="762.500" width="29.500" height="29.500"/><rect x="249.500" y="762.500" width="29.500" height="29.500" stroke="#dcdcdc"/>
</g>
<g fill="#800000">
<path d="M76,770.500v13l-7.500,-6.500ZM83.500,770.500v13l-7.500,-6.500Z"/><path d="M110,770.500v13l-7.500,-6.500Z"/><path d="M140,770.500v13l-7,-6.500Z"/><path d="M166,770.500v13l7.500,-6.500Z"/><path d="M196,770.500v13l7.500,-6.500Z"/><path d="M223,770.500v13l7.500,-6.500ZM231,770.500v13l7.500,-6.500Z"/>
</g>
<path d="M65.500,770.500v13M100.500,770.500v13M206,770.500v13M241.500,770.500v13" stroke="#141486" stroke-width="1.500"/>
<rect x="259" y="772" width="11" height="11" fill="#9c8888"/>
<rect x="181.500" y="804" width="68.500" height="25" fill="#9ccbe8" stroke="#66aee0"/><text x="215.700" y="821.700" class="m" textLength="19" lengthAdjust="spacingAndGlyphs">OK</text>
<rect x="255.500" y="804" width="68" height="25" fill="#c8cacd" stroke="#aeb0b3"/><text x="289.300" y="821.700" class="m" textLength="40" lengthAdjust="spacingAndGlyphs">Cancel</text>
</svg>
</body></html>
